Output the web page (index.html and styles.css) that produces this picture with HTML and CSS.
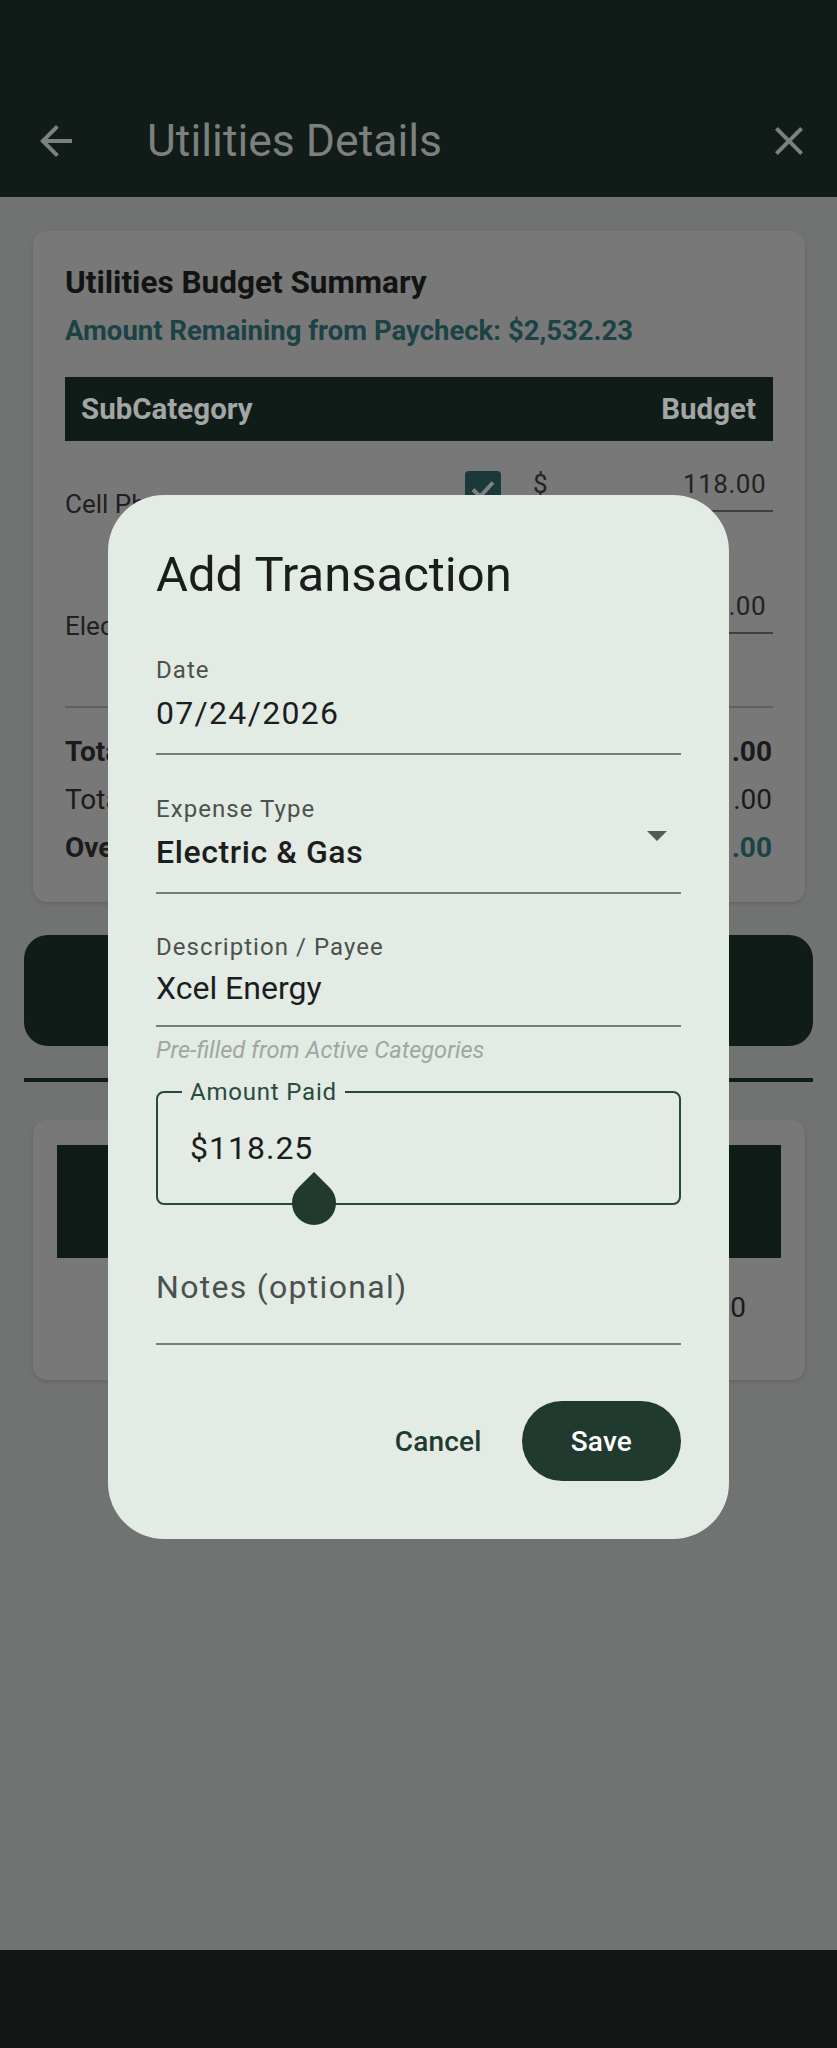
FILE: index.html
```html
<!DOCTYPE html>
<html lang="en">
<head>
<meta charset="utf-8">
<title>Utilities Details</title>
<link rel="stylesheet" href="styles.css">
</head>
<body>
<div class="screen">
  <header class="appbar">
    <div class="appbar-row">
      <svg class="icon" viewBox="0 0 24 24"><path d="M20 11H7.83l5.59-5.59L12 4l-8 8 8 8 1.41-1.41L7.83 13H20v-2z"/></svg>
      <h1 class="appbar-title">Utilities Details</h1>
      <svg class="icon" viewBox="0 0 24 24"><path d="M19 6.41L17.59 5 12 10.59 6.41 5 5 6.41 10.59 12 5 17.59 6.41 19 12 13.41 17.59 19 19 17.59 13.41 12z"/></svg>
    </div>
  </header>

  <main class="content">
    <section class="card summary">
      <h2 class="card-title">Utilities Budget Summary</h2>
      <p class="remaining">Amount Remaining from Paycheck: $2,532.23</p>
      <div class="thead"><span>SubCategory</span><span>Budget</span></div>
      <div class="row">
        <span class="row-name">Cell Phone</span>
        <div class="row-ctrl">
          <span class="checkbox"><svg viewBox="0 0 36 36"><path d="M8 18.5l7 7 13-14"/></svg></span>
          <div class="money"><span>$</span><span class="amt">118.00</span></div>
        </div>
      </div>
      <div class="row">
        <span class="row-name">Electric &amp; Gas</span>
        <div class="row-ctrl">
          <span class="checkbox"><svg viewBox="0 0 36 36"><path d="M8 18.5l7 7 13-14"/></svg></span>
          <div class="money"><span>$</span><span class="amt">153.00</span></div>
        </div>
      </div>
      <div class="divider"></div>
      <div class="totals">
        <div class="total-row bold"><span>Total Budget</span><span>$271.00</span></div>
        <div class="total-row"><span>Total Spent</span><span>$11.00</span></div>
        <div class="total-row bold"><span>Over/Under</span><span class="teal">$261.00</span></div>
      </div>
    </section>

    <button class="add-btn" type="button">+ Add Transaction</button>
    <div class="rule"></div>

    <section class="card history">
      <div class="hist-head"></div>
      <div class="hist-row"><span>Total Spent: $0.00</span></div>
    </section>
  </main>

  <nav class="sysnav"></nav>

  <div class="dialog" role="dialog">
    <h2 class="dialog-title">Add Transaction</h2>
    <div class="form">
      <div class="field">
        <div class="field-label">Date</div>
        <div class="field-value">07/24/2026</div>
      </div>
      <div class="field select">
        <div class="select-body">
          <div class="field-label">Expense Type</div>
          <div class="field-value medium">Electric &amp; Gas</div>
        </div>
        <svg class="drop" viewBox="0 0 20 10"><path d="M0 0h20L10 10z"/></svg>
      </div>
      <div class="field desc">
        <div class="field-label">Description / Payee</div>
        <div class="field-value">Xcel Energy</div>
      </div>
      <div class="helper">Pre-filled from Active Categories</div>
      <div class="outlined">
        <span class="outlined-label">Amount Paid</span>
        <span class="amount">$118.25<span class="handle"></span></span>
      </div>
      <div class="field notes">
        <div class="field-value placeholder">Notes (optional)</div>
      </div>
    </div>
    <div class="actions">
      <button class="btn-text" type="button">Cancel</button>
      <button class="btn-filled" type="button">Save</button>
    </div>
  </div>
</div>
</body>
</html>
```

FILE: styles.css
```css
* { box-sizing: border-box; }

body {
  margin: 0;
  font-family: Roboto, "Noto Sans", "Liberation Sans", sans-serif;
  background: #717372;
}

.screen {
  position: relative;
  width: 837px;
  height: 2048px;
  display: flex;
  flex-direction: column;
  background: #717372;
  overflow: hidden;
}

/* App bar */
.appbar {
  background: #111c19;
  height: 197px;
  padding-top: 85px;
  flex: none;
}
.appbar-row {
  height: 112px;
  display: flex;
  align-items: center;
  padding: 0 24px 0 32px;
}
.icon {
  width: 48px;
  height: 48px;
  fill: #7c807e;
  flex: none;
}
.appbar-title {
  flex: 1;
  margin: 0 0 0 67px;
  font-size: 44.5px;
  line-height: 56px;
  font-weight: 400;
  color: #7c807e;
}

/* Content */
.content { flex: 1; }

.card {
  background: #787878;
  border-radius: 14px;
  box-shadow: 0 2px 4px rgba(0, 0, 0, 0.12);
}
.summary {
  margin: 34px 32px 0 33px;
  padding: 32px 32px 30px;
}
.card-title {
  margin: 0;
  font-size: 31.5px;
  line-height: 40px;
  font-weight: 700;
  color: #121413;
}
.remaining {
  margin: 8px 0 0;
  font-size: 27.5px;
  line-height: 40px;
  font-weight: 700;
  color: #1b4345;
}
.thead {
  margin-top: 26px;
  height: 64px;
  background: #101c18;
  display: flex;
  justify-content: space-between;
  align-items: center;
  padding: 0 17px 0 16px;
  font-size: 29.5px;
  font-weight: 700;
  color: #a3a6a4;
}
.row {
  height: 122px;
  display: flex;
  align-items: center;
}
.row-name {
  flex: 1;
  font-size: 26px;
  line-height: 36px;
  padding-top: 4px;
  color: #1f201f;
}
.row-ctrl {
  display: flex;
  align-items: center;
  padding-bottom: 26px;
}
.checkbox {
  width: 36px;
  height: 36px;
  border-radius: 4px;
  background: #1b383a;
  margin-right: 28px;
  display: block;
}
.checkbox svg {
  width: 36px;
  height: 36px;
  display: block;
  fill: none;
  stroke: #7d807e;
  stroke-width: 4;
}
.money {
  width: 244px;
  display: flex;
  border-bottom: 2px solid #3f403f;
  padding: 0 7px 8px 4px;
  font-size: 26px;
  line-height: 36px;
  color: #222322;
}
.money .amt {
  flex: 1;
  text-align: right;
  letter-spacing: 0.5px;
}
.divider {
  height: 2px;
  background: #5f605f;
  margin-top: 21px;
}
.totals { margin-top: 20px; }
.total-row {
  display: flex;
  justify-content: space-between;
  padding-right: 1px;
  font-size: 28px;
  line-height: 48px;
  color: #1a1b1a;
}
.total-row.bold { font-weight: 700; }
.teal { color: #1b4345; }

.add-btn {
  display: block;
  width: calc(100% - 48px);
  margin: 33px 24px 0;
  height: 111px;
  border: none;
  border-radius: 24px;
  background: #0f1c18;
  color: #6f7371;
  font-family: inherit;
  font-size: 30px;
}
.rule {
  margin: 32px 24px 0;
  height: 4px;
  background: #0f1c18;
}
.history {
  margin: 38px 32px 0 33px;
  padding: 25px 24px 48px;
}
.hist-head {
  height: 113px;
  background: #101c18;
}
.hist-row {
  margin-top: 26px;
  display: flex;
  justify-content: flex-end;
  padding-right: 35px;
  font-size: 28px;
  line-height: 48px;
  color: #1a1b1a;
}

.sysnav {
  height: 98px;
  background: #141615;
  flex: none;
}

/* Dialog */
.dialog {
  position: absolute;
  left: 108px;
  top: 495px;
  width: 621px;
  padding: 48px 48px 58px;
  background: #e3ebe5;
  border-radius: 56px;
}
.dialog-title {
  margin: 0;
  font-size: 49px;
  line-height: 64px;
  font-weight: 400;
  color: #1b1d1c;
}
.form { margin-top: 47px; }
.field {
  border-bottom: 2px solid #777d79;
  padding-bottom: 13px;
}
.field + .field { margin-top: 38px; }
.field-label {
  font-size: 24px;
  line-height: 32px;
  color: #4b514d;
  letter-spacing: 1.05px;
}
.field-value {
  font-size: 32px;
  line-height: 54px;
  color: #1c1d1c;
  letter-spacing: 1.3px;
}
.field-value.medium { font-weight: 500; letter-spacing: 0.6px; }
.select {
  display: flex;
  align-items: center;
}
.select-body { flex: 1; }
.drop {
  width: 20px;
  height: 10px;
  fill: #555a57;
  margin-right: 14px;
  flex: none;
}
.field.desc { padding-bottom: 12px; margin-top: 37px; }
.field.desc .field-value { line-height: 50px; letter-spacing: 0; }
.helper {
  margin-top: 8px;
  font-size: 23.6px;
  line-height: 30px;
  font-style: italic;
  color: #a0a6a2;
}
.outlined {
  position: relative;
  margin-top: 26px;
  height: 114px;
  border: 2px solid #2b463c;
  border-radius: 8px;
  padding-left: 32px;
  display: flex;
  align-items: center;
}
.outlined-label {
  position: absolute;
  left: 24px;
  top: -17px;
  padding: 0 8px;
  background: #e3ebe5;
  font-size: 24px;
  line-height: 32px;
  color: #2b4a3f;
  letter-spacing: 0.8px;
}
.amount {
  position: relative;
  font-size: 32px;
  line-height: 48px;
  letter-spacing: 1px;
  color: #1c1d1c;
}
.handle {
  position: absolute;
  left: calc(100% - 21px);
  top: 57px;
  width: 44px;
  height: 44px;
  background: #213a30;
  border-radius: 0 50% 50% 50%;
  transform: rotate(45deg);
}
.field.notes {
  margin-top: 56px;
  padding-bottom: 30px;
}
.field-value.placeholder {
  line-height: 52px;
  color: #4b514d;
}
.actions {
  margin-top: 56px;
  display: flex;
  justify-content: flex-end;
  gap: 16px;
}
.btn-text,
.btn-filled {
  height: 80px;
  border: none;
  border-radius: 40px;
  font-family: inherit;
  font-size: 28px;
  font-weight: 500;
  letter-spacing: 0.2px;
}
.btn-text {
  padding: 0 24px;
  background: transparent;
  color: #213a30;
}
.btn-filled {
  padding: 0 49px;
  background: #213a30;
  color: #ffffff;
}
```
